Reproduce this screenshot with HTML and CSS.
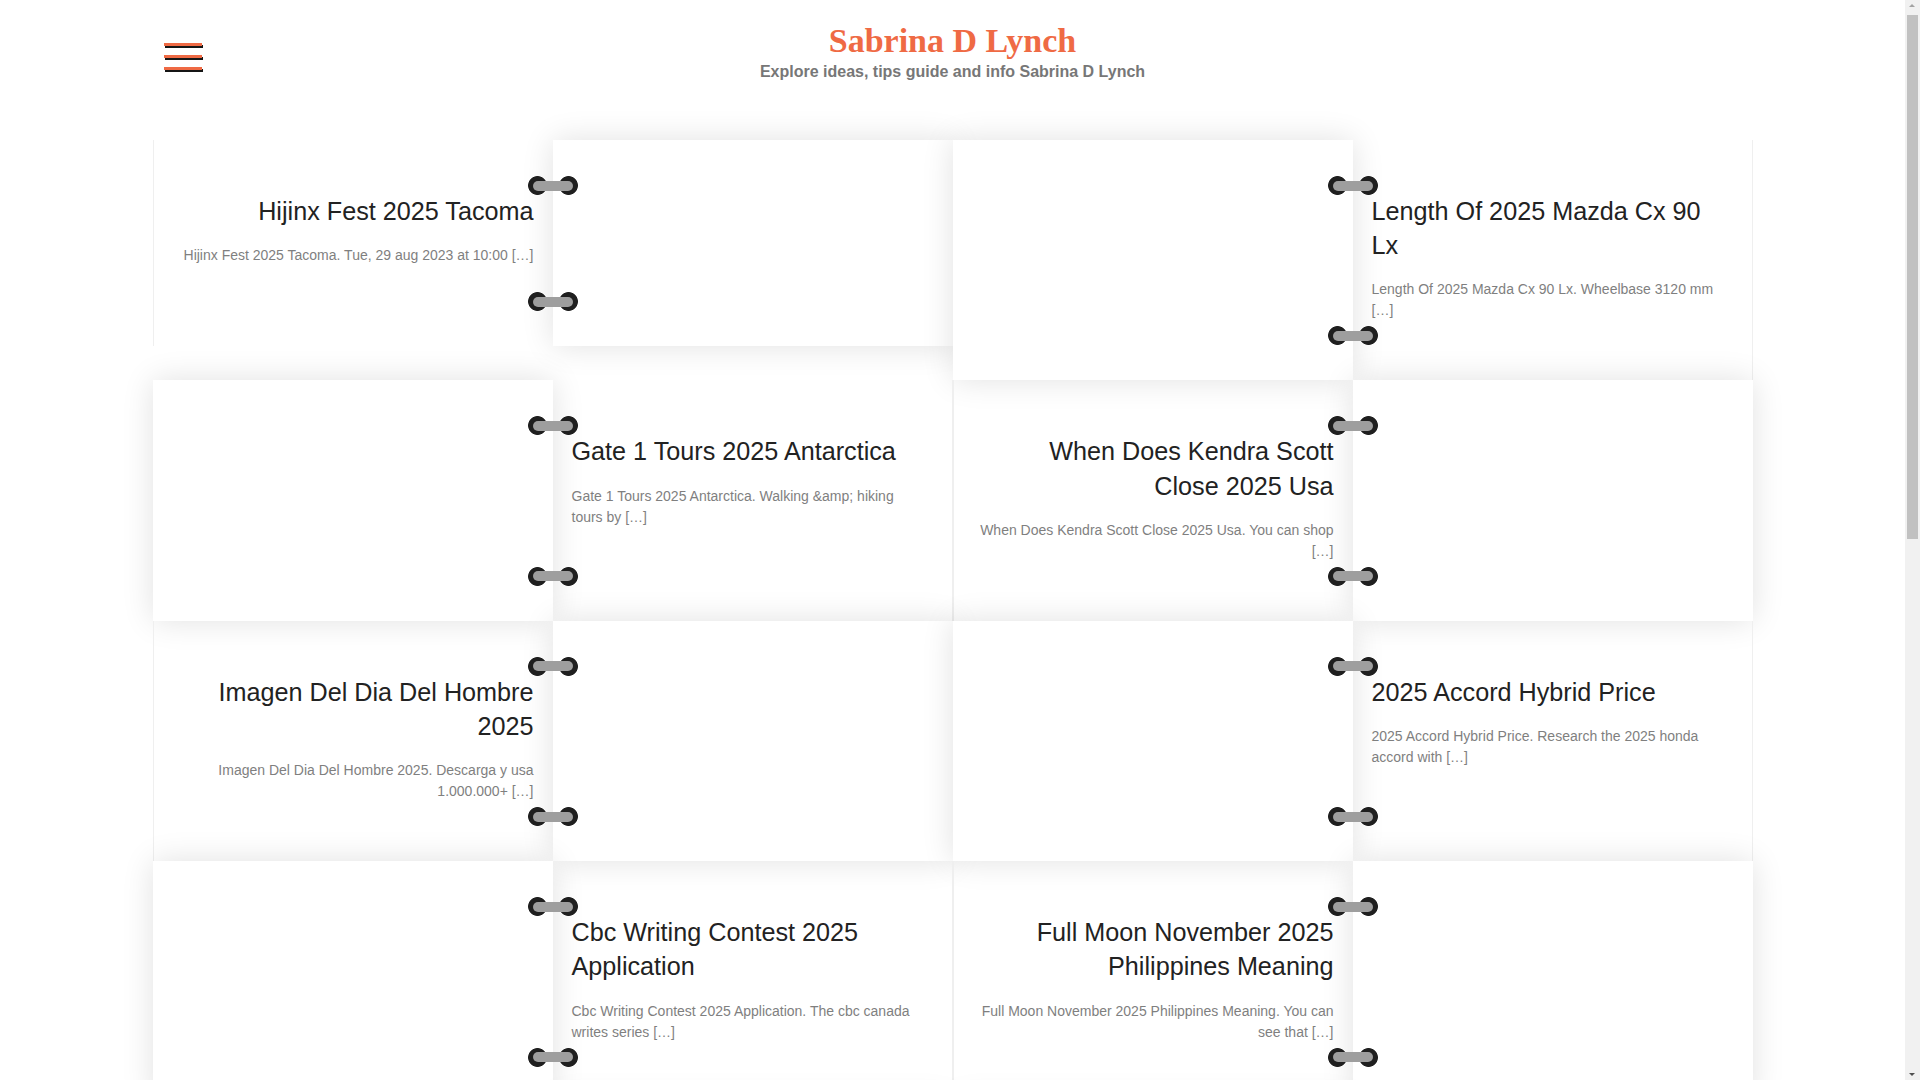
FILE: index.html
```html
<!DOCTYPE html>
<html lang="en">
  <head>
    <meta charset="UTF-8" />
    <meta name="viewport" content="width=device-width, initial-scale=1.0" />
    <title>Sabrina D Lynch</title>
    <link rel="stylesheet" href="styles.css">
  </head>
  <body>
    <header class="site-header">
      <button class="menu-toggle" aria-label="Menu">
        <span></span><span></span><span></span>
      </button>
      <div class="branding">
        <h1 class="site-title"><a href="#">Sabrina D Lynch</a></h1>
        <p class="site-description">Explore ideas, tips guide and info Sabrina D Lynch</p>
      </div>
    </header>

    <main class="posts">
      <article class="post is-short">
        <div class="post-text">
          <h2 class="entry-title"><a href="#">Hijinx Fest 2025 Tacoma</a></h2>
          <p class="entry-summary">Hijinx Fest 2025 Tacoma. Tue, 29 aug 2023 at 10:00 [&hellip;]</p>
        </div>
        <div class="post-media"></div>
        <span class="ring ring-top"></span>
        <span class="ring ring-bottom"></span>
      </article>

      <article class="post flip">
        <div class="post-media"></div>
        <div class="post-text">
          <h2 class="entry-title"><a href="#">Length Of 2025 Mazda Cx 90 Lx</a></h2>
          <p class="entry-summary">Length Of 2025 Mazda Cx 90 Lx. Wheelbase 3120 mm [&hellip;]</p>
        </div>
        <span class="ring ring-top"></span>
        <span class="ring ring-bottom"></span>
      </article>

      <article class="post flip">
        <div class="post-media"></div>
        <div class="post-text">
          <h2 class="entry-title"><a href="#">Gate 1 Tours 2025 Antarctica</a></h2>
          <p class="entry-summary">Gate 1 Tours 2025 Antarctica. Walking &amp;amp; hiking tours by [&hellip;]</p>
        </div>
        <span class="ring ring-top"></span>
        <span class="ring ring-bottom"></span>
      </article>

      <article class="post">
        <div class="post-text">
          <h2 class="entry-title"><a href="#">When Does Kendra Scott Close 2025 Usa</a></h2>
          <p class="entry-summary">When Does Kendra Scott Close 2025 Usa. You can shop [&hellip;]</p>
        </div>
        <div class="post-media"></div>
        <span class="ring ring-top"></span>
        <span class="ring ring-bottom"></span>
      </article>

      <article class="post">
        <div class="post-text">
          <h2 class="entry-title"><a href="#">Imagen Del Dia Del Hombre 2025</a></h2>
          <p class="entry-summary">Imagen Del Dia Del Hombre 2025. Descarga y usa 1.000.000+ [&hellip;]</p>
        </div>
        <div class="post-media"></div>
        <span class="ring ring-top"></span>
        <span class="ring ring-bottom"></span>
      </article>

      <article class="post flip">
        <div class="post-media"></div>
        <div class="post-text">
          <h2 class="entry-title"><a href="#">2025 Accord Hybrid Price</a></h2>
          <p class="entry-summary">2025 Accord Hybrid Price. Research the 2025 honda accord with [&hellip;]</p>
        </div>
        <span class="ring ring-top"></span>
        <span class="ring ring-bottom"></span>
      </article>

      <article class="post flip">
        <div class="post-media"></div>
        <div class="post-text">
          <h2 class="entry-title"><a href="#">Cbc Writing Contest 2025 Application</a></h2>
          <p class="entry-summary">Cbc Writing Contest 2025 Application. The cbc canada writes series [&hellip;]</p>
        </div>
        <span class="ring ring-top"></span>
        <span class="ring ring-bottom"></span>
      </article>

      <article class="post">
        <div class="post-text">
          <h2 class="entry-title"><a href="#">Full Moon November 2025 Philippines Meaning</a></h2>
          <p class="entry-summary">Full Moon November 2025 Philippines Meaning. You can see that [&hellip;]</p>
        </div>
        <div class="post-media"></div>
        <span class="ring ring-top"></span>
        <span class="ring ring-bottom"></span>
      </article>

      <article class="post">
        <div class="post-text">
          <h2 class="entry-title"><a href="#">Chinese New Year 2025 Animal Sign</a></h2>
          <p class="entry-summary">Chinese New Year 2025 Animal Sign. The year of the wood [&hellip;]</p>
        </div>
        <div class="post-media"></div>
        <span class="ring ring-top"></span>
        <span class="ring ring-bottom"></span>
      </article>

      <article class="post flip">
        <div class="post-media"></div>
        <div class="post-text">
          <h2 class="entry-title"><a href="#">Best Time To Visit Japan 2025</a></h2>
          <p class="entry-summary">Best Time To Visit Japan 2025. Spring and autumn are [&hellip;]</p>
        </div>
        <span class="ring ring-top"></span>
        <span class="ring ring-bottom"></span>
      </article>

      <article class="post flip">
        <div class="post-media"></div>
        <div class="post-text">
          <h2 class="entry-title"><a href="#">Nfl Draft 2025 Mock Picks</a></h2>
          <p class="entry-summary">Nfl Draft 2025 Mock Picks. See the latest first round [&hellip;]</p>
        </div>
        <span class="ring ring-top"></span>
        <span class="ring ring-bottom"></span>
      </article>

      <article class="post">
        <div class="post-text">
          <h2 class="entry-title"><a href="#">Easter Sunday 2025 Date Usa</a></h2>
          <p class="entry-summary">Easter Sunday 2025 Date Usa. Easter falls on april 20 [&hellip;]</p>
        </div>
        <div class="post-media"></div>
        <span class="ring ring-top"></span>
        <span class="ring ring-bottom"></span>
      </article>

      <article class="post">
        <div class="post-text">
          <h2 class="entry-title"><a href="#">Honda Pilot 2025 Trim Levels</a></h2>
          <p class="entry-summary">Honda Pilot 2025 Trim Levels. Compare the sport, ex-l and [&hellip;]</p>
        </div>
        <div class="post-media"></div>
        <span class="ring ring-top"></span>
        <span class="ring ring-bottom"></span>
      </article>

      <article class="post flip">
        <div class="post-media"></div>
        <div class="post-text">
          <h2 class="entry-title"><a href="#">Mothers Day 2025 Gift Ideas</a></h2>
          <p class="entry-summary">Mothers Day 2025 Gift Ideas. Find thoughtful presents for [&hellip;]</p>
        </div>
        <span class="ring ring-top"></span>
        <span class="ring ring-bottom"></span>
      </article>

      <article class="post flip">
        <div class="post-media"></div>
        <div class="post-text">
          <h2 class="entry-title"><a href="#">Spring Break 2025 Florida Dates</a></h2>
          <p class="entry-summary">Spring Break 2025 Florida Dates. Most schools close in [&hellip;]</p>
        </div>
        <span class="ring ring-top"></span>
        <span class="ring ring-bottom"></span>
      </article>

      <article class="post">
        <div class="post-text">
          <h2 class="entry-title"><a href="#">Toyota Tacoma 2025 Release Date</a></h2>
          <p class="entry-summary">Toyota Tacoma 2025 Release Date. The new model arrives [&hellip;]</p>
        </div>
        <div class="post-media"></div>
        <span class="ring ring-top"></span>
        <span class="ring ring-bottom"></span>
      </article>
    </main>

    <div class="scrollbar" aria-hidden="true"><div class="scrollbar-thumb"></div></div>
  </body>
</html>
```

FILE: styles.css
```css
* {
  box-sizing: border-box;
}

:root {
  --accent: #ef6a44;
  --title-color: #222222;
  --muted: #7f7f7f;
  --line: #efefef;
}

body {
  margin: 0;
  padding-right: 15px;
  background: #ffffff;
  font-family: "Liberation Sans", Arial, sans-serif;
  color: var(--title-color);
}

a {
  color: inherit;
  text-decoration: none;
}

/* header */

.site-header {
  max-width: 1600px;
  margin: 0 auto;
  padding: 21px 11px 57px;
  display: grid;
  grid-template-columns: 1fr auto 1fr;
}

.menu-toggle {
  justify-self: start;
  align-self: start;
  margin-top: 22px;
  width: 38px;
  padding: 0;
  border: 0;
  background: none;
  display: flex;
  flex-direction: column;
  gap: 9px;
  cursor: pointer;
}

.menu-toggle span {
  display: block;
  height: 3px;
  background: var(--accent);
  box-shadow: 1px 2px 0 #151515;
}

.branding {
  text-align: center;
}

.site-title {
  margin: 0;
  font-family: "Liberation Serif", "Times New Roman", serif;
  font-size: 34px;
  line-height: 40px;
  font-weight: 700;
  color: var(--accent);
}

.site-description {
  margin: 0;
  font-size: 16px;
  line-height: 22px;
  font-weight: 700;
  color: #777777;
}

/* posts */

.posts {
  max-width: 1600px;
  margin: 0 auto;
  padding-bottom: 100px;
  display: grid;
  grid-template-columns: 1fr 1fr;
}

.post {
  position: relative;
  display: grid;
  grid-template-columns: 1fr 1fr;
  min-height: 206px;
}

.post.is-short {
  align-self: start;
}

.post-text {
  padding: 54px 19px 59px 23px;
  border-left: 1px solid var(--line);
  text-align: right;
}

.post-text .entry-title {
  padding-left: 10px;
}

.flip .post-text {
  padding: 54px 23px 59px 19px;
  border-left: 0;
  border-right: 1px solid var(--line);
  text-align: left;
}

.flip .post-text .entry-title {
  padding-left: 0;
  padding-right: 10px;
}

.post-media {
  background: #ffffff;
  box-shadow: 0 0 30px rgba(0, 0, 0, 0.12);
}

.entry-title {
  margin: 0;
  font-size: 25.2px;
  line-height: 34.2px;
  font-weight: 400;
  color: var(--title-color);
}

.entry-summary {
  margin: 17px 0 0;
  font-size: 14px;
  line-height: 21px;
  color: var(--muted);
}

/* spiral binding */

.ring {
  position: absolute;
  left: 50%;
  margin-left: -25px;
  width: 50px;
  height: 19px;
  background:
    radial-gradient(circle at 9.5px 50%, #1f1f1f 9px, transparent 9.8px),
    radial-gradient(circle at 40.5px 50%, #1f1f1f 9px, transparent 9.8px);
}

.ring::after {
  content: "";
  position: absolute;
  left: 5px;
  right: 5px;
  top: 4.5px;
  height: 10px;
  border-radius: 5px;
  background: #9e9e9e;
}

.ring-top {
  top: 36px;
}

.ring-bottom {
  bottom: 35px;
}

/* window scrollbar */

.scrollbar {
  position: fixed;
  top: 0;
  right: 0;
  bottom: 0;
  width: 15px;
  background: #f1f1f1;
  padding: 15px 2px 0;
}

.scrollbar::before,
.scrollbar::after {
  content: "";
  position: absolute;
  left: 4px;
  border-left: 3.5px solid transparent;
  border-right: 3.5px solid transparent;
}

.scrollbar::before {
  top: 4px;
  border-bottom: 3px solid #a3a3a3;
}

.scrollbar::after {
  bottom: 4px;
  border-top: 3px solid #505050;
}

.scrollbar-thumb {
  height: 524px;
  background: #c1c1c1;
}
```
